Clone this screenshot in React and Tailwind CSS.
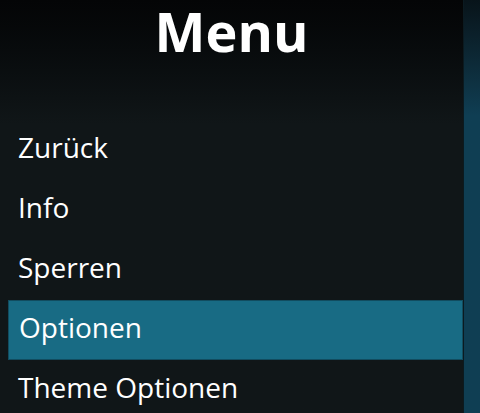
import React from 'react';

const items = ['Zurück', 'Info', 'Sperren', 'Optionen', 'Theme Optionen'];
const selected = 3;

export default function App() {
  return (
    <div
      className="flex w-[480px] h-[413px] overflow-hidden bg-[#101618]"
      style={{ fontFamily: '"Open Sans", "Liberation Sans", sans-serif' }}
    >
      <div className="flex flex-col w-[464px] bg-gradient-to-b from-[#040506] to-[#101618] to-[30%] border-r border-[#0b1a20]">
        <div className="h-[120px] shrink-0 flex justify-center">
          <h1 className="text-[54px] leading-[60px] font-bold text-white mt-[1px]">Menu</h1>
        </div>
        <ul className="flex flex-col">
          {items.map((label, i) =>
            i === selected ? (
              <li
                key={label}
                className="h-[60px] shrink-0 ml-[8px] pl-[10px] pt-[12px] text-[28px] leading-none text-white bg-[#186b84] border border-[#114c5f]"
              >
                {label}
              </li>
            ) : (
              <li key={label} className="h-[60px] shrink-0 pl-[18px] pt-[13px] text-[28px] leading-none text-white">
                {label}
              </li>
            )
          )}
        </ul>
      </div>
      <div className="flex-1 bg-gradient-to-b from-[#08141a] to-[#0f3e53] to-[28%]" />
    </div>
  );
}
